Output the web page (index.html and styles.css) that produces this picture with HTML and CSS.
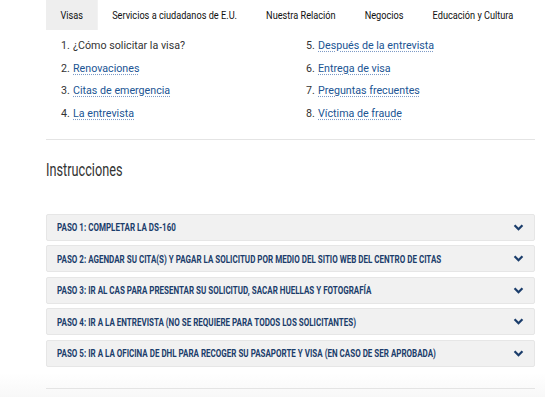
FILE: index.html
```html
<!DOCTYPE html>
<html lang="es">
<head>
<meta charset="utf-8">
<title>Visas</title>
<link rel="stylesheet" href="styles.css">
</head>
<body>
<div class="container">
  <nav class="tabs">
    <a class="tab active">Visas</a>
    <a class="tab">Servicios a ciudadanos de E.U.</a>
    <a class="tab">Nuestra Relación</a>
    <a class="tab">Negocios</a>
    <a class="tab">Educación y Cultura</a>
  </nav>
  <ol class="steps">
    <li><span class="num">1.</span><span class="current">¿Cómo solicitar la visa?</span></li>
    <li><span class="num">5.</span><a class="link">Después de la entrevista</a></li>
    <li><span class="num">2.</span><a class="link">Renovaciones</a></li>
    <li><span class="num">6.</span><a class="link">Entrega de visa</a></li>
    <li><span class="num">3.</span><a class="link">Citas de emergencia</a></li>
    <li><span class="num">7.</span><a class="link">Preguntas frecuentes</a></li>
    <li><span class="num">4.</span><a class="link">La entrevista</a></li>
    <li><span class="num">8.</span><a class="link">Víctima de fraude</a></li>
  </ol>
  <hr class="rule">
  <h2 class="heading">Instrucciones</h2>
  <div class="accordion">
    <div class="acc-item"><span class="acc-title">PASO 1: COMPLETAR LA DS-160</span><svg class="chev" viewBox="0 0 12 8"><path d="M1.5 1.5 L6 6 L10.5 1.5"/></svg></div>
    <div class="acc-item"><span class="acc-title">PASO 2: AGENDAR SU CITA(S) Y PAGAR LA SOLICITUD POR MEDIO DEL SITIO WEB DEL CENTRO DE CITAS</span><svg class="chev" viewBox="0 0 12 8"><path d="M1.5 1.5 L6 6 L10.5 1.5"/></svg></div>
    <div class="acc-item"><span class="acc-title">PASO 3: IR AL CAS PARA PRESENTAR SU SOLICITUD, SACAR HUELLAS Y FOTOGRAFÍA</span><svg class="chev" viewBox="0 0 12 8"><path d="M1.5 1.5 L6 6 L10.5 1.5"/></svg></div>
    <div class="acc-item"><span class="acc-title">PASO 4: IR A LA ENTREVISTA (NO SE REQUIERE PARA TODOS LOS SOLICITANTES)</span><svg class="chev" viewBox="0 0 12 8"><path d="M1.5 1.5 L6 6 L10.5 1.5"/></svg></div>
    <div class="acc-item"><span class="acc-title">PASO 5: IR A LA OFICINA DE DHL PARA RECOGER SU PASAPORTE Y VISA (EN CASO DE SER APROBADA)</span><svg class="chev" viewBox="0 0 12 8"><path d="M1.5 1.5 L6 6 L10.5 1.5"/></svg></div>
  </div>
</div>
<div class="bottom">
  <div class="container"><hr class="rule bottom-rule"></div>
</div>
</body>
</html>
```

FILE: styles.css
```css
html, body {
  margin: 0;
  padding: 0;
  background: #fff;
}
html {
  overflow-x: hidden;
}
body {
  font-family: Roboto, "Liberation Sans", sans-serif;
  color: #333;
}
.container {
  margin-left: 46px;
  width: 489px;
}
/* condensed look: the whole tab strip is narrowed horizontally */
.tabs {
  display: flex;
  height: 30px;
  align-items: stretch;
  transform: scaleX(0.835);
  transform-origin: left top;
}
.tab {
  display: flex;
  align-items: center;
  padding: 0 17.4px;
  font-family: Roboto, "Liberation Sans", sans-serif;
  font-size: 11px;
  color: #111;
  white-space: nowrap;
}
.tab.active {
  background: #eeeeee;
}
.steps {
  list-style: none;
  margin: 0;
  padding: 4px 0 0 15px;
  display: grid;
  grid-template-columns: 245px 229px;
  grid-auto-rows: 22.7px;
  font-size: 10.7px;
}
.steps li {
  display: flex;
  align-items: center;
  white-space: nowrap;
}
.num {
  width: 12px;
  color: #333;
}
.current {
  color: #333;
}
.link {
  color: #205493;
  text-decoration: underline dotted #7d9ac6;
  text-underline-offset: 2px;
}
.rule {
  border: 0;
  border-top: 1px solid #e4e4e4;
  margin: 0;
}
.steps + .rule {
  margin-top: 14px;
}
.heading {
  margin: 19px 0 0;
  font-family: Roboto, "Liberation Sans", sans-serif;
  font-weight: normal;
  font-size: 18.7px;
  line-height: 22px;
  color: #333;
  white-space: nowrap;
  transform: scaleX(0.68);
  transform-origin: left center;
}
.accordion {
  margin-top: 33px;
  display: flex;
  flex-direction: column;
  gap: 4.5px;
}
.acc-item {
  height: 25px;
  border: 1px solid #e6e6e6;
  border-radius: 2px;
  background: #f1f1f1;
  display: flex;
  align-items: center;
  padding: 0 10px 0 10px;
  color: #1b3d6b;
}
.acc-title {
  flex: 1;
  min-width: 0;
  font-family: Roboto, "Liberation Sans", sans-serif;
  font-weight: 700;
  font-size: 11.7px;
  line-height: 14px;
  white-space: nowrap;
  transform: scaleX(0.685);
  transform-origin: left center;
}
.chev {
  flex: none;
  width: 11px;
  height: 7px;
  fill: none;
  stroke: #1b3d6b;
  stroke-width: 2.6;
}
.bottom {
  margin-top: 6px;
  height: 24px;
  padding-top: 15px;
  background: linear-gradient(#ffffff, #f3f3f3);
}
.bottom-rule {
  border-top-color: #e4e4e4;
}
```
